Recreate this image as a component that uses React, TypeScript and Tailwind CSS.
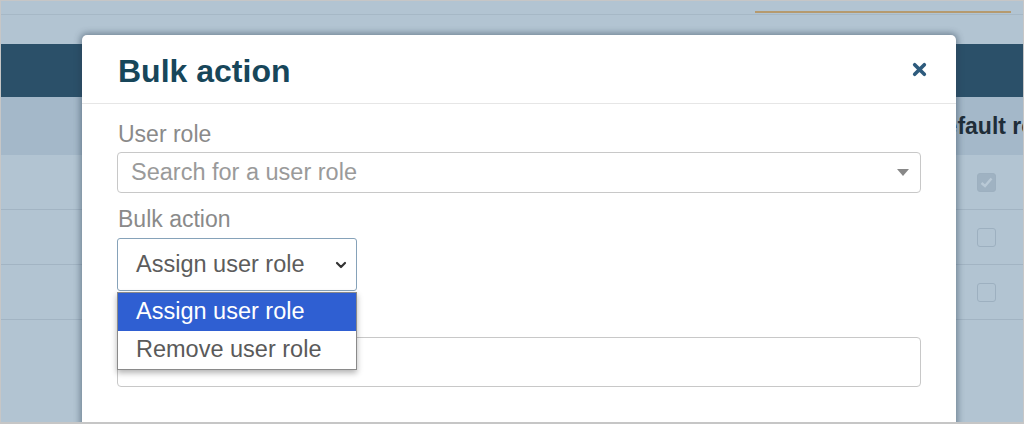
import React from 'react';

const rows = [true, false, false];

function CloseIcon() {
  return (
    <svg width="15" height="15" viewBox="0 0 14 14" className="text-[#2e5b7d]">
      <path d="M2.5 2.5 L11.5 11.5 M11.5 2.5 L2.5 11.5" stroke="currentColor" strokeWidth="3.4" strokeLinecap="round" />
    </svg>
  );
}

function Caret() {
  return (
    <svg width="12" height="7" viewBox="0 0 12 7" className="text-[#888]">
      <path d="M0 0 H12 L6 7 Z" fill="currentColor" />
    </svg>
  );
}

function Chevron() {
  return (
    <svg width="12" height="8" viewBox="0 0 12 8" className="text-[#333]">
      <path d="M2 2 L6 6 L10 2" stroke="currentColor" strokeWidth="2.2" fill="none" strokeLinecap="round" strokeLinejoin="round" />
    </svg>
  );
}

function Checkbox({ checked }: { checked: boolean }) {
  return (
    <div
      className={`w-[19px] h-[19px] rounded-[3px] border border-[#9db0c0] flex items-center justify-center ${
        checked ? 'bg-[#9fb2c2]' : ''
      }`}
    >
      {checked && (
        <svg width="13" height="11" viewBox="0 0 13 11">
          <path d="M1.5 6 L5 9 L11.5 1.5" stroke="#b9c9d6" strokeWidth="2.4" fill="none" />
        </svg>
      )}
    </div>
  );
}

export default function App() {
  return (
    <div className="relative w-[1024px] h-[424px] overflow-hidden border border-b-2 border-[#c6c6c6] bg-[#b2c4d2] font-['Liberation_Sans',Arial,sans-serif]">
      {/* page behind the overlay */}
      <div className="flex flex-col">
        <div className="h-[14px] border-b border-[#a6b8c6] flex justify-end">
          <div className="mt-[10px] mr-[12px] h-[2px] w-[256px] bg-[#b59a6f]" />
        </div>
        <div className="h-[29px]" />
        <div className="h-[53px] bg-[#2b5069]" />
        <div className="h-[58px] bg-[#a4b8c9] flex items-center">
          <span className="ml-[927px] whitespace-nowrap text-[23px] font-bold text-[#1f2d38]">Default role</span>
        </div>
        {rows.map((checked, i) => (
          <div key={i} className="h-[55px] border-b border-[#a2b4c3] flex items-center">
            <div className="ml-[976px]">
              <Checkbox checked={checked} />
            </div>
          </div>
        ))}
      </div>

      {/* modal */}
      <div className="absolute z-10 left-[81px] top-[34px] w-[874px] h-[420px] bg-white rounded-t-[5px] shadow-[0_0_6px_2px_rgba(40,60,80,0.45)]">
        <div className="h-[69px] border-b border-[#e6e6e6] flex items-center justify-between pl-[36px] pr-[29px]">
          <h2 className="text-[32px] font-bold text-[#17465a] pt-[4px]">Bulk action</h2>
          <CloseIcon />
        </div>

        <div className="relative px-[35px] pt-[16px]">
          <label className="block text-[23px] leading-[28px] text-[#8a8a8a] pl-[1px]">User role</label>
          <div className="mt-[4px] h-[41px] border border-[#c8c8c8] rounded-[4px] flex items-center justify-between pl-[13px] pr-[11px]">
            <span className="text-[23.5px] text-[#9a9a9a]">Search for a user role</span>
            <Caret />
          </div>

          <label className="block mt-[12px] text-[23px] leading-[28px] text-[#8a8a8a] pl-[1px]">Bulk action</label>
          <div className="relative mt-[5px] w-[240px]">
            <div className="h-[53px] border border-[#86a2b9] rounded-[3px] flex items-center justify-between pl-[18px] pr-[9px]">
              <span className="text-[23.5px] text-[#5c5c5c]">Assign user role</span>
              <Chevron />
            </div>
            <ul className="absolute z-10 left-0 top-[54px] w-[240px] bg-white border border-[#8a8a8a] shadow-[0_3px_6px_rgba(0,0,0,0.3)]">
              <li className="h-[38px] flex items-center pl-[18px] bg-[#2f5fd2] text-white text-[23.5px]">Assign user role</li>
              <li className="h-[38px] flex items-center pl-[18px] text-[#5a5a5a] text-[23.5px]">Remove user role</li>
            </ul>
          </div>

          {/* label row for the field under the open list */}
          <div className="mt-[14px] h-[28px]" />
          <div className="mt-[4px] h-[50px] border border-[#c8c8c8] rounded-[4px]" />
        </div>
      </div>
    </div>
  );
}
